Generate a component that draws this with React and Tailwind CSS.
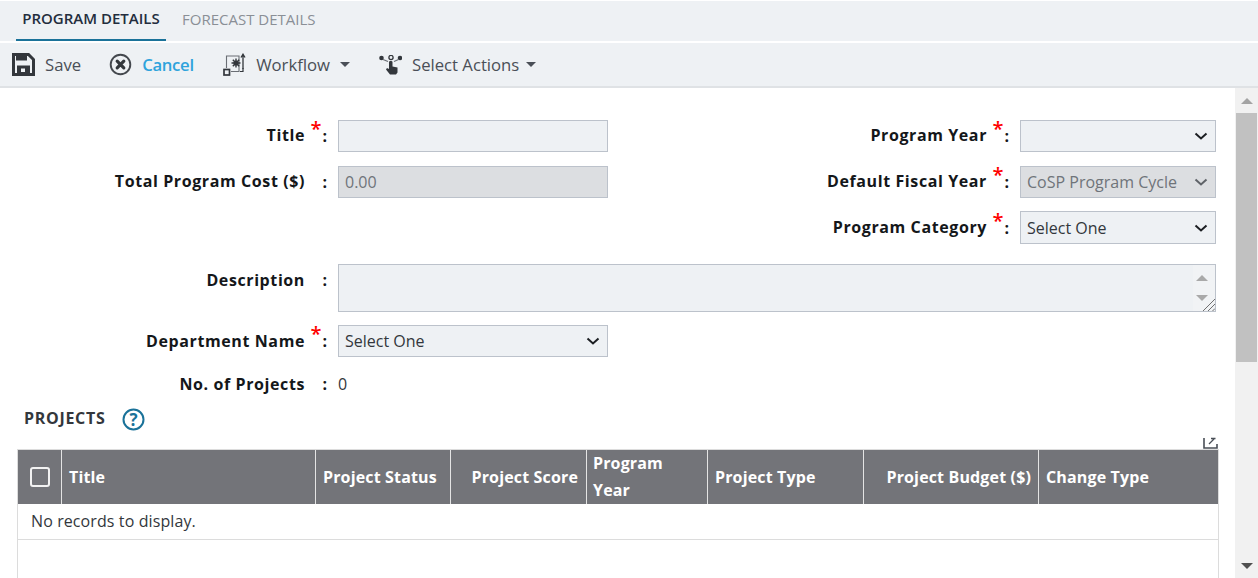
const Caret = ({ gap = "ml-[10px]" }) => (
  <span className={`${gap} inline-block border-x-[5px] border-t-[5px] border-x-transparent border-t-[#4a4f57]`}></span>
);

const Chevron = ({ color = "#1c1f23" }) => (
  <svg
    className="pointer-events-none absolute right-[8px] top-1/2 mt-[-4px]"
    width="14"
    height="8"
    viewBox="0 0 14 8"
    fill="none"
  >
    <path d="M1.5 1.5L7 6.5L12.5 1.5" stroke={color} strokeWidth="2" />
  </svg>
);

const SaveIcon = () => (
  <svg width="23" height="23" viewBox="0 0 23 23" fill="none">
    <path d="M1.5 1.5H16.5L21.5 6.5V21.5H1.5Z" stroke="#33373c" strokeWidth="3" />
    <path d="M4 2H15V7.5H4Z" fill="#33373c" />
    <path d="M5 12.5H18V21H5Z" fill="#33373c" />
    <rect x="9" y="15.5" width="4" height="3.5" fill="#eef1f4" />
  </svg>
);

const CancelIcon = () => (
  <svg width="23" height="23" viewBox="0 0 23 23" fill="none">
    <circle cx="11.5" cy="11.5" r="9.8" stroke="#44484e" strokeWidth="1.9" />
    <path d="M8.2 8.2L14.8 14.8M14.8 8.2L8.2 14.8" stroke="#33373c" strokeWidth="3.2" strokeLinecap="round" />
  </svg>
);

const WorkflowIcon = () => (
  <svg width="23" height="23" viewBox="0 0 23 23" fill="none">
    <path d="M3.5 15V3H16V18.5H8" stroke="#6a6e74" strokeWidth="1.1" />
    <rect x="1" y="16.5" width="5.5" height="5.5" stroke="#33373c" strokeWidth="1.7" />
    <circle cx="13" cy="10" r="2.6" fill="#33373c" />
    <path d="M13 5.5V14.5M8.5 10H17.5M9.8 6.8L16.2 13.2M16.2 6.8L9.8 13.2" stroke="#33373c" strokeWidth="1.4" />
    <path d="M20 16V2M18 4.5L20 1.2L22 4.5" stroke="#33373c" strokeWidth="1.3" />
    <path d="M17 18.5H20V15" stroke="#33373c" strokeWidth="1.2" />
  </svg>
);

const ActionsIcon = () => (
  <svg width="23" height="20" viewBox="0 0 23 20" fill="none">
    <circle cx="2.5" cy="3" r="2.3" fill="#33373c" />
    <circle cx="21" cy="3" r="2.3" fill="#33373c" />
    <circle cx="12" cy="2.5" r="2.1" stroke="#33373c" strokeWidth="1.3" />
    <path d="M4 4.5L9 6.5M19.5 4.5L15 6.5" stroke="#6a6e74" strokeWidth="1.2" />
    <path d="M10 7C10 5.8 13.5 5.8 13.5 7V11.5L18.5 12.5V17.5L17 19.5H11L7 14.5L8 13L10 14Z" fill="#33373c" />
  </svg>
);

const HelpIcon = () => (
  <svg width="23" height="23" viewBox="0 0 23 23" fill="none">
    <circle cx="11.5" cy="11.5" r="10" stroke="#1a7299" strokeWidth="2" />
    <text x="11.5" y="17.5" textAnchor="middle" fontSize="17" fontWeight="700" fill="#1a7299" fontFamily="'Open Sans', sans-serif">?</text>
  </svg>
);

const ExpandIcon = () => (
  <svg width="15" height="12" viewBox="0 0 15 12" fill="none">
    <path d="M1 1V11H14V7" stroke="#4a4f57" strokeWidth="1.6" />
    <path d="M6 7L11 2M8 1.5H12.5" stroke="#4a4f57" strokeWidth="1.3" />
  </svg>
);

const Marker = ({ required }) => (
  <span className="flex w-[22px] shrink-0 items-start justify-end font-bold text-[#14171a]">
    {required && (
      <span className="mr-[1px] mt-[-7px] text-[20px] font-semibold leading-[24px] text-[#ff0000]">*</span>
    )}
    <span className="text-[16px] leading-[24px]">:</span>
  </span>
);

const Label = ({ children, width, required }) => (
  <div className="flex shrink-0 items-center">
    <span className={`${width} text-right text-[16px] font-bold leading-[24px] tracking-[0.6px] text-[#14171a]`}>
      {children}
    </span>
    <Marker required={required} />
  </div>
);

const inputBase = "h-[32px] border border-[#bcc2cb] px-[6px] text-[16px] outline-none";

const columns = [
  { name: "Title", cls: "w-[254px] justify-start px-[7px]" },
  { name: "Project Status", cls: "w-[135px] justify-start px-[7px]" },
  { name: "Project Score", cls: "w-[136px] justify-end pr-[8px]" },
  { name: "Program Year", cls: "w-[121px] justify-start px-[6px]" },
  { name: "Project Type", cls: "w-[156px] justify-start px-[7px]" },
  { name: "Project Budget ($)", cls: "w-[175px] justify-end px-[7px]" },
  { name: "Change Type", cls: "flex-1 justify-start px-[7px]" },
];

const App = () => {
  return (
    <div className="flex h-[578px] w-[1258px] flex-col overflow-hidden bg-white font-['Open_Sans',sans-serif]">
      {/* Tabs */}
      <div className="mt-[1px] flex h-[40px] shrink-0 bg-[#eef1f4] pl-[16px]">
        <div className="flex h-[40px] w-[150px] items-center justify-center border-b-2 border-[#1a7299] pb-[3px] text-[15px] font-semibold text-[#232d3d]">
          PROGRAM DETAILS
        </div>
        <div className="ml-[16px] flex h-[38px] items-center pb-[1px] text-[15px] text-[#8a8f96]">FORECAST DETAILS</div>
      </div>

      {/* Toolbar */}
      <div className="mt-[2px] flex h-[45px] shrink-0 items-center border-b-2 border-[#dfe2e5] bg-[#eef1f4] pl-[12px] text-[16.7px] text-[#4a4f57]">
        <SaveIcon />
        <span className="ml-[10px]">Save</span>
        <span className="ml-[28px]"><CancelIcon /></span>
        <span className="ml-[10px] w-[52px] whitespace-nowrap font-semibold tracking-[-0.3px] text-[#2ea3dc]">Cancel</span>
        <span className="ml-[29px]"><WorkflowIcon /></span>
        <span className="ml-[10px]">Workflow</span>
        <Caret />
        <span className="ml-[29px]"><ActionsIcon /></span>
        <span className="ml-[10px]">Select Actions</span>
        <Caret gap="ml-[7px]" />
      </div>

      <div className="flex min-h-0 flex-1">
        <div className="min-w-0 flex-1 pt-[32px]">
          {/* Top fields */}
          <div className="flex justify-between pr-[19px]">
            <div className="flex flex-col gap-[14px]">
              <div className="flex items-center">
                <Label width="w-[305px]" required><span className="relative top-[-1px]">Title</span></Label>
                <input className={`${inputBase} ml-[11px] w-[270px] bg-[#eef1f4]`} />
              </div>
              <div className="flex items-center">
                <Label width="w-[305px]"><span className="relative top-[-1px]">Total Program Cost ($)</span></Label>
                <input disabled value="0.00" readOnly className={`${inputBase} ml-[11px] w-[270px] bg-[#dcdee1] text-[#6f747a]`} />
              </div>
            </div>
            <div className="flex flex-col gap-[14px]">
              <div className="flex items-center">
                <Label width="w-[201px]" required><span className="relative top-[-1px]">Program Year</span></Label>
                <div className="relative ml-[11px] w-[196px]">
                  <select className={`${inputBase} w-full appearance-none bg-[#eef1f4]`}>
                    <option></option>
                  </select>
                  <Chevron />
                </div>
              </div>
              <div className="flex items-center">
                <Label width="w-[201px]" required><span className="relative top-[-1px]">Default Fiscal Year</span></Label>
                <div className="relative ml-[11px] w-[196px]">
                  <select disabled className={`${inputBase} w-full appearance-none bg-[#dcdee1] text-[#6f747a] opacity-100`}>
                    <option>CoSP Program Cycle</option>
                  </select>
                  <Chevron color="#5f6368" />
                </div>
              </div>
              <div className="mt-[-1px] flex items-center">
                <Label width="w-[201px]" required><span className="relative top-[-1px]">Program Category</span></Label>
                <div className="relative ml-[11px] w-[196px]">
                  <select className={`${inputBase} h-[33px] w-full appearance-none bg-[#eef1f4] text-[#33373c]`}>
                    <option>Select One</option>
                  </select>
                  <Chevron />
                </div>
              </div>
            </div>
          </div>

          {/* Description */}
          <div className="mt-[20px] flex items-start pr-[19px]">
            <div className="pt-[4px]">
              <Label width="w-[305px]">Description</Label>
            </div>
            <div className="relative ml-[11px] flex h-[48px] flex-1 border border-[#bcc2cb]">
              <textarea className="h-full flex-1 resize-none bg-[#eef1f4] outline-none"></textarea>
              <div className="flex w-[22px] flex-col items-center bg-[#f1f3f5] pr-[4px] pt-[10px]">
                <span className="border-x-[6px] border-b-[6px] border-x-transparent border-b-[#a9a9a9]"></span>
                <span className="mt-[14px] border-x-[6px] border-t-[6px] border-x-transparent border-t-[#a9a9a9]"></span>
              </div>
              <svg className="absolute bottom-0 right-0" width="13" height="13" viewBox="0 0 13 13" fill="none">
                <path d="M1 13L13 1M6 13L13 6M10.5 13L13 10.5" stroke="#6f6f6f" strokeWidth="1" />
              </svg>
            </div>
          </div>

          <div className="mt-[13px] flex items-center">
            <Label width="w-[305px]" required>Department Name</Label>
            <div className="relative ml-[11px] w-[270px]">
              <select className={`${inputBase} w-full appearance-none bg-[#eef1f4] text-[#33373c]`}>
                <option>Select One</option>
              </select>
              <Chevron />
            </div>
          </div>

          <div className="mt-[15px] flex h-[24px] items-center">
            <Label width="w-[305px]">No. of Projects</Label>
            <span className="ml-[11px] text-[16px] text-[#33373c]">0</span>
          </div>

          {/* Projects */}
          <div className="mt-[11px] flex h-[24px] items-center pl-[24px]">
            <span className="relative top-[-1px] text-[16px] font-bold tracking-[0.7px] text-[#33373c]">PROJECTS</span>
            <span className="ml-[17px]"><HelpIcon /></span>
          </div>

          <div className="mt-[4px] flex h-[14px] items-end justify-end pr-[17px]">
            <ExpandIcon />
          </div>

          <div className="ml-[17px] mr-[16px] h-[200px] border-x border-t border-[#dcdcdc]">
            <div className="flex h-[54px] bg-[#737479] text-[16px] font-bold leading-[27px] tracking-[0.15px] text-white">
              <div className="flex w-[43px] items-center justify-center">
                <span className="h-[20px] w-[20px] rounded-[3px] border-2 border-[#f2f2f2] bg-[#737479]"></span>
              </div>
              {columns.map((col) => (
                <div
                  key={col.name}
                  className={`flex items-center border-l border-[#e4e4e4] ${col.cls}`}
                >
                  {col.name}
                </div>
              ))}
            </div>
            <div className="flex h-[36px] items-center border-b border-[#dcdcdc] pb-[1px] pl-[13px] text-[16px] tracking-[0.1px] text-[#33373c]">
              No records to display.
            </div>
          </div>
        </div>

        {/* Scrollbar */}
        <div className="flex w-[23px] shrink-0 flex-col bg-[#f1f1f1] pl-[1px] pr-[1px]">
          <div className="flex h-[25px] items-center justify-center">
            <span className="border-x-[6px] border-b-[6px] border-x-transparent border-b-[#a3a3a3]"></span>
          </div>
          <div className="h-[249px] w-full bg-[#c1c1c1]"></div>
          <div className="mt-auto flex h-[25px] items-center justify-center">
            <span className="border-x-[6px] border-t-[6px] border-x-transparent border-t-[#505050]"></span>
          </div>
        </div>
      </div>
    </div>
  );
};

export default App;
